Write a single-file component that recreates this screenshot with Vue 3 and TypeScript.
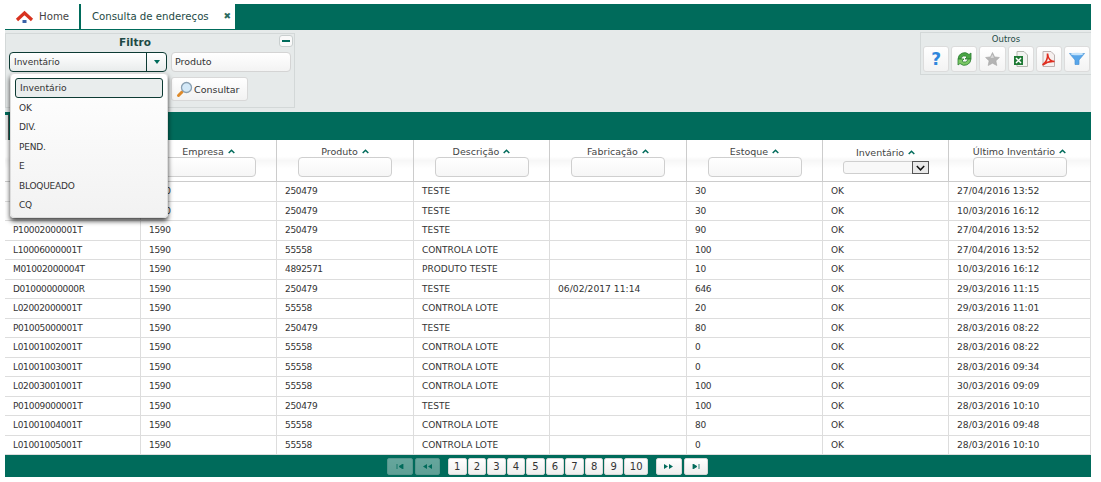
<script setup lang="ts">
const options = ['OK', 'DIV.', 'PEND.', 'E', 'BLOQUEADO', 'CQ']
const columns = [
  { label: 'Endereço', w: 136, kind: 'tight' },
  { label: 'Empresa', w: 136, kind: 'tight' },
  { label: 'Produto', w: 137, kind: 'tight' },
  { label: 'Descrição', w: 136, kind: 'text' },
  { label: 'Fabricação', w: 137, kind: 'date' },
  { label: 'Estoque', w: 136, kind: 'tight' },
  { label: 'Inventário', w: 126, kind: 'text' },
  { label: 'Último Inventário', w: 142, kind: 'date' },
]
const rows: string[][] = [
  ['P10001000001T', '1590', '250479', 'TESTE', '', '30', 'OK', '27/04/2016 13:52'],
  ['P10001000002T', '1590', '250479', 'TESTE', '', '30', 'OK', '10/03/2016 16:12'],
  ['P10002000001T', '1590', '250479', 'TESTE', '', '90', 'OK', '27/04/2016 13:52'],
  ['L10006000001T', '1590', '55558', 'CONTROLA LOTE', '', '100', 'OK', '27/04/2016 13:52'],
  ['M01002000004T', '1590', '4892571', 'PRODUTO TESTE', '', '10', 'OK', '10/03/2016 16:12'],
  ['D01000000000R', '1590', '250479', 'TESTE', '06/02/2017 11:14', '646', 'OK', '29/03/2016 11:15'],
  ['L02002000001T', '1590', '55558', 'CONTROLA LOTE', '', '20', 'OK', '29/03/2016 11:01'],
  ['P01005000001T', '1590', '250479', 'TESTE', '', '80', 'OK', '28/03/2016 08:22'],
  ['L01001002001T', '1590', '55558', 'CONTROLA LOTE', '', '0', 'OK', '28/03/2016 08:22'],
  ['L01001003001T', '1590', '55558', 'CONTROLA LOTE', '', '0', 'OK', '28/03/2016 09:34'],
  ['L02003001001T', '1590', '55558', 'CONTROLA LOTE', '', '100', 'OK', '30/03/2016 09:09'],
  ['P01009000001T', '1590', '250479', 'TESTE', '', '100', 'OK', '28/03/2016 10:10'],
  ['L01001004001T', '1590', '55558', 'CONTROLA LOTE', '', '80', 'OK', '28/03/2016 09:48'],
  ['L01001005001T', '1590', '55558', 'CONTROLA LOTE', '', '0', 'OK', '28/03/2016 10:10'],
]
const pages = [1, 2, 3, 4, 5, 6, 7, 8, 9, 10]
</script>

<template>
  <div class="page">
    <header class="tabs">
      <div class="tab home">
        <svg class="home-ico" width="19" height="14" viewBox="0 0 19 14">
          <path d="M2 10 9.500 3 17 10" fill="none" stroke="#d8321f" stroke-width="3.200" stroke-linejoin="miter" />
          <rect x="7.500" y="10" width="4" height="3" fill="#3a62a8" />
        </svg>
        <span>Home</span>
      </div>
      <div class="tab active">
        <span>Consulta de endereços</span>
        <span class="close">✖</span>
      </div>
    </header>

    <section class="toolbar">
      <div class="filter">
        <div class="filter-title">Filtro</div>
        <button class="collapse"><i></i></button>
        <div class="filter-row">
          <div class="select">
            <span class="select-label">Inventário</span>
            <span class="select-btn"><i></i></span>
          </div>
          <div class="input-box">Produto</div>
        </div>
        <div class="filter-row second">
          <button class="consult">
            <svg width="17" height="17" viewBox="0 0 17 17">
              <path d="M6 11 2.500 14.500" stroke="#de8a2a" stroke-width="3" stroke-linecap="round" />
              <circle cx="10.500" cy="6.500" r="5" fill="#d4e9f8" stroke="#8aa0b2" stroke-width="1.300" />
            </svg>
            Consultar
          </button>
        </div>
      </div>

      <div class="others">
        <div class="others-title">Outros</div>
        <div class="others-row">
          <button class="tool"><span class="q">?</span></button>
          <button class="tool">
            <svg width="17" height="16" viewBox="0 0 17 16">
              <path d="M2 8a6.500 6.500 0 0 1 11-4.500L15 2v6H9l2-2A3.500 3.500 0 0 0 5 8Z" fill="#4aa544" stroke="#2b7d33" stroke-width=".8" />
              <path d="M15 8a6.500 6.500 0 0 1-11 4.500L2 14V8h6l-2 2a3.500 3.500 0 0 0 6-2Z" fill="#7cc765" stroke="#2b7d33" stroke-width=".8" />
            </svg>
          </button>
          <button class="tool">
            <svg width="15" height="14" viewBox="0 0 15 14">
              <path d="M7.500.5 9.600 4.900 14.400 5.500 10.900 8.800 11.800 13.500 7.500 11.200 3.200 13.500 4.100 8.800.6 5.500 5.400 4.900Z" fill="#b4b4b4" stroke="#a6a6a6" stroke-width=".6" />
              <path d="M7.500 2.500 9 5.800 5.500 6Z" fill="#d9d9d9" />
            </svg>
          </button>
          <button class="tool">
            <svg width="15" height="16" viewBox="0 0 15 16">
              <path d="M4 .5h7l3.500 3.500v11.500H4Z" fill="#f2f4f1" stroke="#b3b8b0" />
              <rect x="1" y="5" width="9" height="9" fill="#1f7a35" />
              <path d="M3 7 8 12M8 7 3 12" stroke="#fff" stroke-width="1.500" />
            </svg>
          </button>
          <button class="tool">
            <svg width="15" height="16" viewBox="0 0 15 16">
              <path d="M2 .5h8l3.500 3.500v11.500H2Z" fill="#f6f0ef" stroke="#bdb3b2" />
              <path d="M1.500 14C5 11.500 7 7 6.500 2.500 7 7.500 9 10.500 13.500 10.500 9 10 5 11.500 1.500 14Z" fill="none" stroke="#df2e20" stroke-width="1.600" />
            </svg>
          </button>
          <button class="tool">
            <svg width="16" height="14" viewBox="0 0 16 14">
              <path d="M.5 1.500h15L10 8v4.500H6V8Z" fill="#58a6ea" stroke="#4a93d6" stroke-width=".7" />
              <ellipse cx="8" cy="2" rx="6.500" ry="1.300" fill="#c5e3fa" />
            </svg>
          </button>
        </div>
      </div>
    </section>

    <section class="grid">
      <div class="grid-bar"><span class="grid-bar-btn"></span></div>
      <div class="grid-head">
        <div v-for="(c, i) in columns" :key="c.label" class="th" :style="{ width: c.w + 'px' }">
          <div class="th-label" :class="{ low: i === 6 }">
            {{ c.label }}
            <svg class="sort" width="7" height="5" viewBox="0 0 7 5">
              <path d="M.7 4 3.500 1.200 6.300 4" fill="none" stroke="#006b5b" stroke-width="1.500" />
            </svg>
          </div>
          <div v-if="i === 6" class="th-select"><span class="th-select-btn">
            <svg width="9" height="6" viewBox="0 0 9 6"><path d="M.8 1 4.500 4.800 8.200 1" fill="none" stroke="#111" stroke-width="1.500" /></svg>
          </span></div>
          <div v-else class="th-input"></div>
        </div>
      </div>
      <div v-for="(r, ri) in rows" :key="ri" class="tr">
        <div v-for="(cell, ci) in r" :key="ci" class="td" :class="columns[ci].kind" :style="{ width: columns[ci].w + 'px' }">{{ cell }}</div>
      </div>
      <footer class="pager">
        <button class="pg off"><svg width="8" height="5" viewBox="0 0 8 5"><path d="M1 0v5M7 0v5L3 2.500Z" fill="#006b5b" stroke="#006b5b" stroke-width=".8" /></svg></button>
        <button class="pg off"><svg width="10" height="5" viewBox="0 0 10 5"><path d="M5 0v5L1 2.500ZM10 0v5L6 2.500Z" fill="#006b5b" /></svg></button>
        <div class="nums">
          <button v-for="p in pages" :key="p" class="pg num" :class="{ wide: p === 10 }">{{ p }}</button>
        </div>
        <button class="pg"><svg width="10" height="5" viewBox="0 0 10 5"><path d="M0 0v5L4 2.500ZM5 0v5L9 2.500Z" fill="#006b5b" /></svg></button>
        <button class="pg"><svg width="8" height="5" viewBox="0 0 8 5"><path d="M1 0v5L5 2.500ZM7 0v5" fill="#006b5b" stroke="#006b5b" stroke-width=".8" /></svg></button>
      </footer>
    </section>

    <div class="menu">
      <div class="menu-item selected">Inventário</div>
      <div v-for="o in options" :key="o" class="menu-item">{{ o }}</div>
    </div>
  </div>
</template>

<style>
html, body { margin: 0; background: #fff; }
</style>

<style scoped>
.page {
  position: relative;
  width: 1086px;
  height: 482px;
  margin-left: 5px;
  padding-top: 4px;
  box-sizing: border-box;
  font-family: "DejaVu Sans", Verdana, sans-serif;
  font-size: 9.5px;
  color: #333;
  overflow: hidden;
}
button { font-family: inherit; padding: 0; margin: 0; cursor: pointer; }
.tabs {
  display: flex;
  height: 26px;
  background: #006b5b;
}
.tab {
  display: flex;
  align-items: center;
  height: 25px;
  background: #fff;
  font-size: 10.200px;
  box-sizing: border-box;
}
.home { width: 74px; padding-left: 10px; gap: 5px; color: #444; font-weight: 500; }
.active { width: 154px; margin-left: 2px; padding-left: 11px; color: #1e4a45; position: relative; }
.close { position: absolute; right: 4px; top: 7px; font-size: 9px; line-height: 10px; color: #2d6b5f; }
.toolbar {
  display: flex;
  justify-content: space-between;
  align-items: flex-start;
  height: 82px;
  background: #e6eaea;
}
.filter {
  position: relative;
  width: 290px;
  height: 75px;
  margin-top: 3px;
  background: #e6eaea;
  border: 1px solid #d3d8d8;
  box-sizing: border-box;
}
.filter-title {
  text-align: center;
  padding: 1px 30px 0 0;
  font-size: 10.500px;
  font-weight: bold;
  color: #1e4a45;
  line-height: 14px;
}
.collapse {
  position: absolute;
  right: 1px;
  top: 1px;
  width: 14px;
  height: 12px;
  background: #fafafa;
  border: 1px solid #c9cfcf;
  border-radius: 3px;
  display: flex;
  align-items: center;
  justify-content: center;
}
.collapse i { width: 8px; height: 2px; background: #006b5b; }
.filter-row { display: flex; gap: 4px; margin: 3px 0 0 3px; }
.filter-row.second { margin: 5px 0 0 165px; }
.select {
  display: flex;
  width: 158px;
  height: 20px;
  border: 1px solid #0d3b34;
  border-radius: 4px;
  box-sizing: border-box;
  background: linear-gradient(#fff, #e9ecec);
  overflow: hidden;
}
.select-label { flex: 1; padding-left: 4px; line-height: 18px; font-size: 9px; color: #333; }
.select-btn {
  width: 19px;
  border-left: 1px solid #0d3b34;
  display: flex;
  align-items: center;
  justify-content: center;
}
.select-btn i {
  width: 0;
  height: 0;
  border: 3px solid transparent;
  border-top: 4px solid #006b5b;
  border-bottom: 0;
}
.input-box {
  width: 120px;
  height: 20px;
  border: 1px solid #d4d4d4;
  border-radius: 4px;
  box-sizing: border-box;
  background: linear-gradient(#fff, #f3f3f3);
  line-height: 18px;
  padding-left: 3px;
}
.consult {
  display: flex;
  align-items: center;
  gap: 1px;
  width: 77px;
  height: 24px;
  padding-left: 4px;
  background: linear-gradient(#fff, #f2f2f2);
  border: 1px solid #d8d8d8;
  border-radius: 3px;
  font-size: 9.500px;
  color: #333;
}
.others {
  width: 171px;
  height: 43px;
  margin-top: 2px;
  background: #e6eaea;
  border: 1px solid #d3d8d8;
  border-right: 0;
  box-sizing: border-box;
}
.others-title { text-align: center; font-size: 8.500px; line-height: 13px; color: #1e4a45; }
.others-row { display: flex; gap: 2px; padding-left: 2px; }
.tool {
  width: 26.200px;
  height: 26px;
  background: linear-gradient(#fff, #f3f3f3);
  border: 1px solid #dcdcdc;
  border-radius: 3px;
  display: flex;
  align-items: center;
  justify-content: center;
}
.q { font-size: 17px; font-weight: bold; color: #2f86dc; }
.grid-bar { height: 28px; background: #006b5b; position: relative; }
.grid-bar-btn {
  position: absolute;
  left: 0;
  top: 3px;
  width: 3px;
  height: 25px;
  background: #e8e8e8;
  border-right: 1px solid #555;
}
.grid-head {
  display: flex;
  height: 42px;
  background: linear-gradient(#fff 40%, #f7f7f7 50%, #fff 70%);
  border-bottom: 1px solid #ccc;
  box-sizing: border-box;
}
.th {
  box-sizing: border-box;
  border-right: 1px solid #ccc;
  display: flex;
  flex-direction: column;
  align-items: center;
  font-weight: 500;
  color: #444;
}
.th:last-child { border-right: 1px solid #ddd; }
.th-label { line-height: 11px; padding-top: 6px; }
.th-label.low { padding-top: 7px; }
.sort { margin-left: 1px; vertical-align: 1px; }
.th-input {
  width: 94px;
  height: 20px;
  border: 1px solid #cfcfcf;
  border-radius: 4px;
  box-sizing: border-box;
  background: linear-gradient(#fff, #f6f6f6);
}
.th-select {
  width: 86px;
  height: 13px;
  border: 1px solid #cfcfcf;
  border-radius: 3px 0 0 3px;
  box-sizing: border-box;
  background: #f8f8f8;
  display: flex;
  justify-content: flex-end;
  margin-top: 3px;
}
.th-select-btn {
  width: 17px;
  height: 13px;
  margin: -1px -1px 0 0;
  background: #e9e9e9;
  border: 1px solid #555;
  box-sizing: border-box;
  display: flex;
  align-items: center;
  justify-content: center;
}
.tr { display: flex; height: 19.500px; border-bottom: 1px solid #ddd; box-sizing: border-box; background: #fff; }
.td {
  box-sizing: border-box;
  border-right: 1px solid #ddd;
  padding-left: 8px;
  line-height: 18px;
  font-size: 9px;
  color: #333;
  white-space: nowrap;
}
.td.tight { letter-spacing: -0.35px; }
.td.date { font-size: 9.200px; }
.pager {
  display: flex;
  align-items: center;
  justify-content: flex-start;
  height: 22px;
  padding-left: 382px;
  gap: 2px;
  background: #006b5b;
}
.pg {
  width: 25.500px;
  height: 17px;
  background: linear-gradient(#fff, #eee);
  border: 1px solid #d8d8d8;
  border-radius: 2px;
  display: flex;
  align-items: center;
  justify-content: center;
  font-size: 10px;
  color: #333;
}
.pg:last-child { width: 24px; }
.pg.off { opacity: 0.4; }
.nums { display: flex; gap: 1px; margin: 0 6px; }
.num { width: 18.550px; }
.num.wide { width: 24.500px; }
.menu {
  position: absolute;
  left: 5px;
  top: 73px;
  width: 158px;
  height: 145px;
  box-sizing: border-box;
  padding: 4px 4px 0;
  background: linear-gradient(#fff, #f2f2f2);
  border: 1px solid #ddd;
  border-radius: 4px;
  box-shadow: 0 3px 5px rgba(0, 0, 0, 0.75);
}
.menu-item {
  height: 19.400px;
  line-height: 19px;
  padding-left: 4px;
  font-size: 9px;
  letter-spacing: -0.2px;
  color: #333;
  box-sizing: border-box;
}
.menu-item.selected {
  height: 20px;
  margin-bottom: 1px;
  line-height: 18px;
  background: #e9eded;
  border: 1px solid #0d3b34;
  border-radius: 3px;
  letter-spacing: 0;
  font-size: 9.200px;
  padding-left: 4px;
}
</style>
